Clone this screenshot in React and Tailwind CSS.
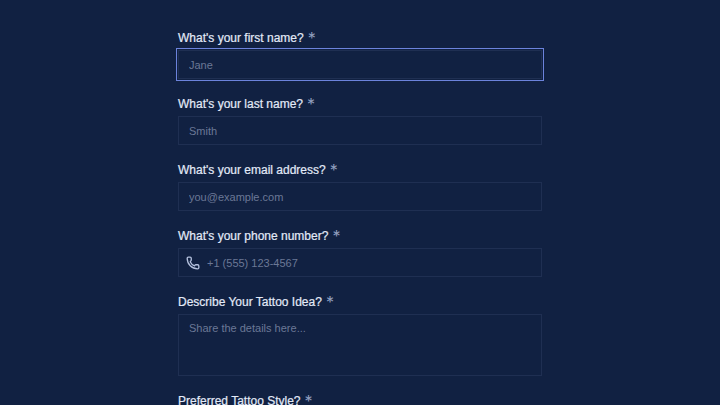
import { Phone } from 'lucide-react'

const FONT = "font-['Liberation_Sans',Arial,sans-serif]"

const INPUT =
  'block w-full border border-[#1f2f52] bg-transparent text-[11px] text-slate-100 placeholder:text-[#6b7896] focus:outline focus:outline-1 focus:outline-offset-1 focus:outline-[#6c83dc]'

const FIELDS = [
  { id: 'first-name', label: "What's your first name?", type: 'text', placeholder: 'Jane', focused: true },
  { id: 'last-name', label: "What's your last name?", type: 'text', placeholder: 'Smith' },
  { id: 'email', label: "What's your email address?", type: 'email', placeholder: 'you@example.com' },
  { id: 'phone', label: "What's your phone number?", type: 'tel', placeholder: '+1 (555) 123-4567', icon: Phone },
]

const Label = ({ htmlFor, children }) => (
  <label htmlFor={htmlFor} className="mb-0.5 flex h-5 items-start gap-1 text-xs leading-5 text-[#e3eaf8]">
    <span className="[-webkit-text-stroke:0.2px_currentColor]">{children}</span>
    <span className="font-['Inter',sans-serif] text-base leading-5 text-[#8f9dbd]">*</span>
  </label>
)

const TextField = ({ id, label, type, placeholder, focused, icon: Icon }) => (
  <div>
    <Label htmlFor={id}>{label}</Label>
    <div className="relative">
      {Icon && (
        <Icon className="absolute top-1/2 left-2 size-3.5 -translate-y-1/2 text-[#b4c1de]" strokeWidth={2.25} />
      )}
      <input
        id={id}
        type={type}
        placeholder={placeholder}
        autoFocus={focused}
        className={`${INPUT} h-[29px] pr-2.5 leading-4 caret-transparent ${Icon ? 'pl-7' : 'pl-2.5'}`}
      />
    </div>
  </div>
)

const App = () => {
  return (
    <main className={`min-h-screen bg-[#112142] px-4 pt-7 ${FONT}`}>
      <form className="mx-auto flex w-full max-w-[364px] flex-col gap-[15px]">
        {FIELDS.map((field) => (
          <TextField key={field.id} {...field} />
        ))}

        <div>
          <Label htmlFor="idea">Describe Your Tattoo Idea?</Label>
          <textarea
            id="idea"
            placeholder="Share the details here..."
            className={`${INPUT} h-[62px] resize-none px-2.5 py-1 leading-[18px]`}
          />
        </div>

        <div>
          <Label htmlFor="style">Preferred Tattoo Style?</Label>
          <input id="style" type="text" className={`${INPUT} h-[29px] px-2.5`} />
        </div>
      </form>
    </main>
  )
}

export default App
